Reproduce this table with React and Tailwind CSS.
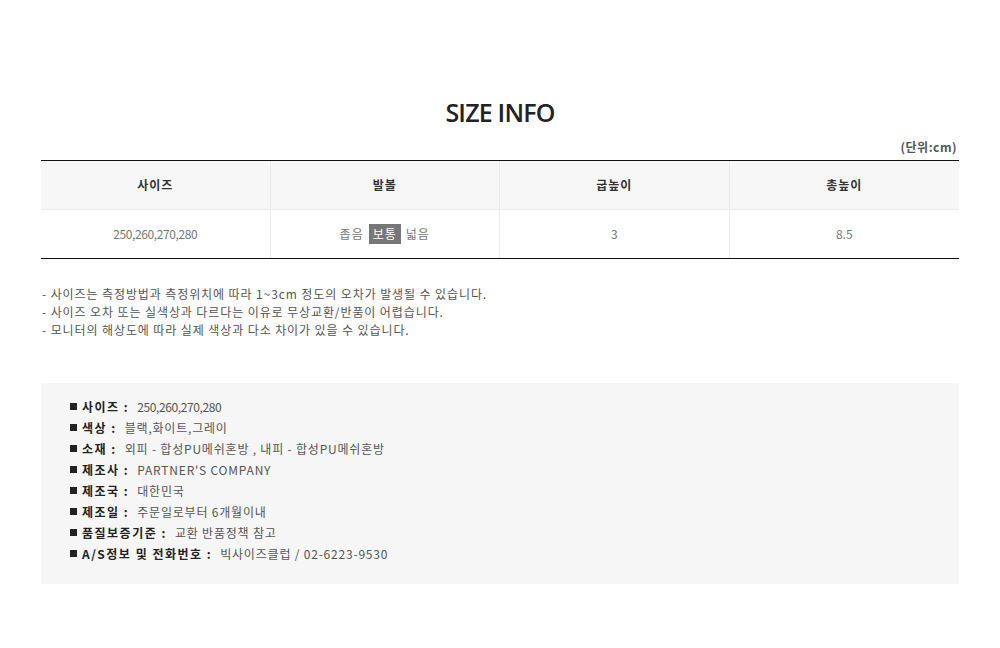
export default function App() {
  const ko = { fontFamily: '"Noto Sans CJK KR", "Noto Sans", sans-serif' };
  const items = [
    ["사이즈", "250,260,270,280", true],
    ["색상", "블랙,화이트,그레이"],
    ["소재", "외피 - 합성PU메쉬혼방 , 내피 - 합성PU메쉬혼방"],
    ["제조사", "PARTNER'S COMPANY"],
    ["제조국", "대한민국"],
    ["제조일", "주문일로부터 6개월이내"],
    ["품질보증기준", "교환 반품정책 참고"],
    ["A/S정보 및 전화번호", "빅사이즈클럽 / 02-6223-9530"],
  ];
  return (
    <div className="w-[1000px] h-[648px] bg-white" style={ko}>
      <div className="w-[918px] mx-auto pt-[94px]">
        <h1
          className="text-center text-[25px] leading-[36px] font-semibold text-[#222] tracking-[-0.8px]"
          style={{ fontFamily: '"Open Sans", "Noto Sans", sans-serif' }}
        >
          SIZE INFO
        </h1>
        <div className="text-right text-[12px] leading-[16px] font-bold text-[#555] tracking-[0.5px] pr-[2px] mt-[9px] pb-[5px]">
          (단위:cm)
        </div>
        <div className="border-t border-b border-[#111]">
          <div className="grid grid-cols-4 bg-[#f7f7f7] h-[49px] text-[12px] font-bold text-[#333] tracking-[1px]">
            {["사이즈", "발볼", "굽높이", "총높이"].map((h, i) => (
              <div
                key={h}
                className={`flex items-center justify-center border-b border-[#ececec] ${i < 3 ? "border-r" : ""}`}
              >
                {h}
              </div>
            ))}
          </div>
          <div className="grid grid-cols-4 h-[48px] text-[12px] text-[#777]">
            <div className="flex items-center justify-center border-r border-[#ececec] tracking-[-0.4px]">
              250,260,270,280
            </div>
            <div className="flex items-center justify-center gap-[5px] border-r border-[#ececec] tracking-[1px]">
              <span>좁음</span>
              <span className="bg-[#777] text-white px-[4px] leading-[20px]">보통</span>
              <span>넓음</span>
            </div>
            <div className="flex items-center justify-center border-r border-[#ececec]">3</div>
            <div className="flex items-center justify-center">8.5</div>
          </div>
        </div>
        <div className="mt-[26px] text-[12px] leading-[18px] text-[#555] tracking-[0.9px] pl-[1px]">
          <p>- 사이즈는 측정방법과 측정위치에 따라 1~3cm 정도의 오차가 발생될 수 있습니다.</p>
          <p>- 사이즈 오차 또는 실색상과 다르다는 이유로 무상교환/반품이 어렵습니다.</p>
          <p>- 모니터의 해상도에 따라 실제 색상과 다소 차이가 있을 수 있습니다.</p>
        </div>
        <div className="mt-[44px] bg-[#f6f6f6] h-[201px] pl-[29px] pt-[13px]">
          {items.map(([k, v, num]) => (
            <div key={k} className="flex items-center h-[21px] text-[12px]">
              <span className="w-[7px] h-[7px] bg-[#222] mr-[5px]" />
              <span className="font-bold text-[#222] tracking-[1.5px]">{k} :</span>
              <span className={`text-[#555] ml-[8px] ${num ? "tracking-[-0.4px]" : "tracking-[0.8px]"}`}>{v}</span>
            </div>
          ))}
        </div>
      </div>
    </div>
  );
}
